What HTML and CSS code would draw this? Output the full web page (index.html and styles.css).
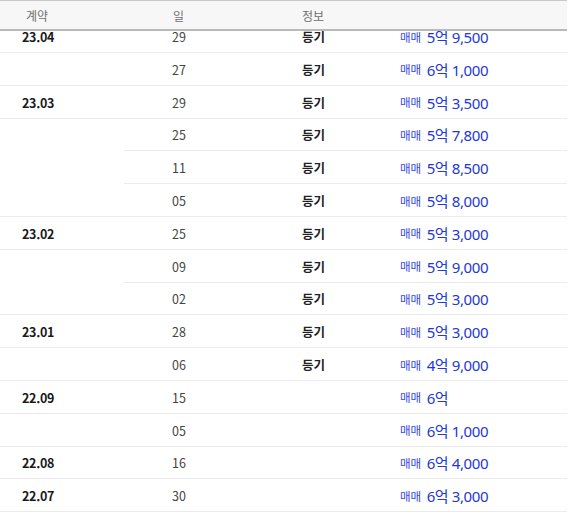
FILE: index.html
```html
<!DOCTYPE html>
<html lang="ko">
<head>
<meta charset="utf-8">
<link rel="stylesheet" href="styles.css">
</head>
<body>
<div class="page">
  <div class="head">
    <div class="c1">계약</div>
    <div class="c2">일</div>
    <div class="c3">정보</div>
    <div class="c4"></div>
  </div>
  <div class="list">
    <div class="row full"><div class="c1 month">23.04</div><div class="c2 day">29</div><div class="c3 kind">등기</div><div class="c4 price"><span class="type">매매</span> 5억 9,500</div></div>
    <div class="row full"><div class="c1 month"></div><div class="c2 day">27</div><div class="c3 kind">등기</div><div class="c4 price"><span class="type">매매</span> 6억 1,000</div></div>

    <div class="row full"><div class="c1 month">23.03</div><div class="c2 day">29</div><div class="c3 kind">등기</div><div class="c4 price"><span class="type">매매</span> 5억 3,500</div></div>
    <div class="row inner"><div class="c1 month"></div><div class="c2 day">25</div><div class="c3 kind">등기</div><div class="c4 price"><span class="type">매매</span> 5억 7,800</div></div>
    <div class="row inner"><div class="c1 month"></div><div class="c2 day">11</div><div class="c3 kind">등기</div><div class="c4 price"><span class="type">매매</span> 5억 8,500</div></div>
    <div class="row full"><div class="c1 month"></div><div class="c2 day">05</div><div class="c3 kind">등기</div><div class="c4 price"><span class="type">매매</span> 5억 8,000</div></div>

    <div class="row full"><div class="c1 month">23.02</div><div class="c2 day">25</div><div class="c3 kind">등기</div><div class="c4 price"><span class="type">매매</span> 5억 3,000</div></div>
    <div class="row inner"><div class="c1 month"></div><div class="c2 day">09</div><div class="c3 kind">등기</div><div class="c4 price"><span class="type">매매</span> 5억 9,000</div></div>
    <div class="row full"><div class="c1 month"></div><div class="c2 day">02</div><div class="c3 kind">등기</div><div class="c4 price"><span class="type">매매</span> 5억 3,000</div></div>

    <div class="row full"><div class="c1 month">23.01</div><div class="c2 day">28</div><div class="c3 kind">등기</div><div class="c4 price"><span class="type">매매</span> 5억 3,000</div></div>
    <div class="row full"><div class="c1 month"></div><div class="c2 day">06</div><div class="c3 kind">등기</div><div class="c4 price"><span class="type">매매</span> 4억 9,000</div></div>

    <div class="row full"><div class="c1 month">22.09</div><div class="c2 day">15</div><div class="c3 kind"></div><div class="c4 price"><span class="type">매매</span> 6억</div></div>
    <div class="row full"><div class="c1 month"></div><div class="c2 day">05</div><div class="c3 kind"></div><div class="c4 price"><span class="type">매매</span> 6억 1,000</div></div>

    <div class="row full"><div class="c1 month">22.08</div><div class="c2 day">16</div><div class="c3 kind"></div><div class="c4 price"><span class="type">매매</span> 6억 4,000</div></div>

    <div class="row full"><div class="c1 month">22.07</div><div class="c2 day">30</div><div class="c3 kind"></div><div class="c4 price"><span class="type">매매</span> 6억 3,000</div></div>
  </div>
</div>
</body>
</html>
```

FILE: styles.css
```css
html, body {
  margin: 0;
  padding: 0;
  background: #fff;
}
body {
  font-family: "Noto Sans CJK KR", "Noto Sans", sans-serif;
  overflow: hidden;
  height: 514px;
}
.page {
  width: 567px;
  display: flex;
  flex-direction: column;
}
.head {
  position: relative;
  z-index: 2;
  display: grid;
  grid-template-columns: 124px 178px 98px 1fr;
  align-items: center;
  height: 31px;
  box-sizing: border-box;
  border-top: 1px solid #c9c9c9;
  border-bottom: 2px solid #b9b9b9;
  background: #f7f7f7;
  font-size: 12px;
  color: #6f6f6f;
}
.head .c1 { padding-left: 26px; }
.head .c2 { padding-left: 49px; }
.list {
  margin-top: -10.8px;
  display: flex;
  flex-direction: column;
}
.row {
  display: grid;
  grid-template-columns: 124px 178px 98px 1fr;
  height: 32.8px;
}
.row > div {
  display: flex;
  align-items: center;
  box-sizing: border-box;
  border-bottom: 1px solid #ececec;
  padding-top: 1px;
}
.row.inner > .c1 {
  border-bottom-color: transparent;
}
.month {
  padding-left: 22px;
  font-size: 12.5px;
  font-weight: 700;
  color: #1a1a1a;
  letter-spacing: -0.3px;
}
.day {
  padding-left: 48px;
  font-size: 12.5px;
  color: #444;
}
.kind {
  font-size: 12.5px;
  font-weight: 700;
  color: #222;
}
.price {
  font-family: "Noto Sans", "Noto Sans CJK KR", sans-serif;
  font-size: 15px;
  letter-spacing: -0.4px;
  color: #2238d8;
  white-space: pre;
}
.type {
  font-family: "Noto Sans CJK KR", sans-serif;
  font-size: 11.5px;
  letter-spacing: 0;
  color: #3348e0;
  margin-right: 2px;
}
```
